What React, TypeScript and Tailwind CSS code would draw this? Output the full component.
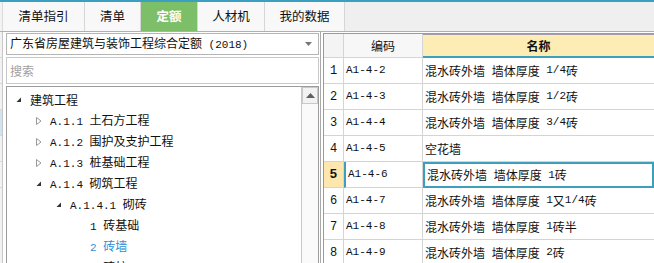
const tabs = ["清单指引", "清单", "定额", "人材机", "我的数据"];
const tabWidths = ["w-[82px]", "w-[56px]", "w-[57px]", "w-[67px]", "w-[80px]"];

const tree = [
  { level: 0, icon: "open", text: "建筑工程" },
  { level: 1, icon: "closed", text: "A.1.1 土石方工程" },
  { level: 1, icon: "closed", text: "A.1.2 围护及支护工程" },
  { level: 1, icon: "closed", text: "A.1.3 桩基础工程" },
  { level: 1, icon: "open", text: "A.1.4 砌筑工程" },
  { level: 2, icon: "open", text: "A.1.4.1 砌砖" },
  { level: 3, icon: "none", text: "1 砖基础" },
  { level: 3, icon: "none", text: "2 砖墙", active: true },
  { level: 3, icon: "none", text: "3 砖柱" },
];

const rows = [
  ["A1-4-2", "混水砖外墙 墙体厚度 1/4砖"],
  ["A1-4-3", "混水砖外墙 墙体厚度 1/2砖"],
  ["A1-4-4", "混水砖外墙 墙体厚度 3/4砖"],
  ["A1-4-5", "空花墙"],
  ["A1-4-6", "混水砖外墙 墙体厚度 1砖"],
  ["A1-4-7", "混水砖外墙 墙体厚度 1又1/4砖"],
  ["A1-4-8", "混水砖外墙 墙体厚度 1砖半"],
  ["A1-4-9", "混水砖外墙 墙体厚度 2砖"],
];

const indent = ["pl-[7px]", "pl-[27px]", "pl-[47px]", "pl-[67px]"];

// ascii runs look like SimSun half-width glyphs, so give them a mono face
function Mixed({ s }: { s: string }) {
  const parts = s.split(/([\x20-\x7e]+)/).filter(Boolean);
  return (
    <>
      {parts.map((p, i) =>
        /^[\x20-\x7e]+$/.test(p) ? (
          <span key={i} className="font-['Liberation_Mono',monospace] text-[11px] whitespace-pre">
            {p}
          </span>
        ) : (
          <span key={i}>{p}</span>
        )
      )}
    </>
  );
}

function TreeIcon({ kind }: { kind: string }) {
  if (kind === "open")
    return (
      <svg width="10" height="10" viewBox="0 0 10 10" className="shrink-0">
        <path d="M7 2.5 L7 7 L2.5 7 Z" fill="#333" />
      </svg>
    );
  if (kind === "closed")
    return (
      <svg width="10" height="10" viewBox="0 0 10 10" className="shrink-0">
        <path d="M2.5 1.5 L7 5 L2.5 8.5 Z" fill="#fff" stroke="#999" strokeWidth="1" />
      </svg>
    );
  return <span className="w-[10px] shrink-0" />;
}

export default function App() {
  return (
    <div className="w-[654px] h-[263px] overflow-hidden bg-white text-[12px] text-[#111] font-['Noto_Sans_CJK_SC',sans-serif] leading-none">
      <div className="h-[2px] bg-[#3b9fbf]" />

      {/* tab bar */}
      <div className="flex h-[30px] bg-[#efefef] border-b border-[#8fca7d]">
        <div className="w-[3px] border-r border-[#dcdcdc] bg-[#f3f3f3]" />
        {tabs.map((t, i) => (
          <div
            key={t}
            className={
              "flex items-center justify-center border-r border-[#d6d6d6] text-[12.5px] " +
              tabWidths[i] +
              (t === "定额" ? " bg-[#7dbf69] text-white font-bold" : " bg-[#f8f8f8]")
            }
          >
            {t}
          </div>
        ))}
      </div>

      <div className="flex h-[231px]">
        {/* left strip */}
        <div className="w-[3px] flex flex-col border-r border-[#c8c8c8] bg-[#f2f2f2]">
          <div className="h-[26px] border-b border-[#d8d8d8]" />
          <div className="h-[26px] border-b border-[#d8d8d8]" />
          <div className="h-[26px] border-b border-[#d8d8d8]" />
          <div className="h-[26px] border-b border-[#d8d8d8] bg-[#cfe4f2]" />
          <div className="h-[26px] border-b border-[#d8d8d8]" />
          <div className="h-[26px] border-b border-[#d8d8d8]" />
        </div>

        {/* left panel */}
        <div className="w-[318px] flex flex-col pl-[3px] pr-[1px] pt-[1px] border-r border-[#a9a9a9] overflow-hidden">
          <div className="h-[22px] shrink-0 flex items-center border border-[#b5b5b5] bg-white pl-[3px] pr-[6px]">
            <span className="flex-1">
              <Mixed s="广东省房屋建筑与装饰工程综合定额 (2018)" />
            </span>
            <svg width="7" height="4" viewBox="0 0 7 4">
              <path d="M0 0 L7 0 L3.5 4 Z" fill="#777" />
            </svg>
          </div>
          <div className="mt-[2px] h-[27px] shrink-0 flex items-center border border-[#c9c9c9] bg-white pl-[3px] text-[#a0a0a0]">
            搜索
          </div>
          <div className="mt-[2px] flex-1 min-h-0 flex border border-[#9c9c9c] border-b-0 bg-white overflow-hidden">
            <div className="flex-1 flex flex-col pt-[2px]">
              {tree.map((n) => (
                <div key={n.text} className={"h-[21px] flex items-center gap-[6px] shrink-0 " + indent[n.level]}>
                  <TreeIcon kind={n.icon} />
                  <span className={n.active ? "text-[#2f8fd8]" : ""}>
                    <Mixed s={n.text} />
                  </span>
                </div>
              ))}
            </div>
            <div className="w-[17px] border-l border-[#c8c8c8] bg-[#fafafa] flex flex-col">
              <div className="h-[17px] flex items-center justify-center border border-[#c9c9c9] bg-[#f2f2f2]">
                <svg width="9" height="5" viewBox="0 0 9 5">
                  <path d="M0 5 L4.5 0 L9 5 Z" fill="#606060" />
                </svg>
              </div>
            </div>
          </div>
        </div>

        {/* grid */}
        <div className="flex-1 ml-[2px] mt-[1px] border-l border-t border-[#9a9a9a] flex flex-col">
          <div className="flex h-[24px] shrink-0">
            <div className="w-[20px] bg-[#f4f4f4] border-r border-b border-[#d4d4d4]" />
            <div className="w-[79px] bg-[#f7f7f7] border-r border-b border-[#d4d4d4] flex items-center justify-center">
              编码
            </div>
            <div className="flex-1 bg-[#fdedb5] border-t border-[#a79dac] border-b-2 border-b-[#3d9fbc] flex items-center justify-center font-bold">
              名称
            </div>
          </div>
          {rows.map(([code, name], i) => {
            const sel = i === 4;
            return (
              <div key={code} className="flex h-[26px] shrink-0">
                <div
                  className={
                    "w-[20px] border-r border-b border-[#d4d4d4] flex items-center justify-center font-['Liberation_Mono',monospace] " +
                    (sel ? "bg-[#fde7ae] font-bold text-[13px]" : "bg-white text-[12px]")
                  }
                >
                  {i + 1}
                </div>
                <div
                  className={
                    "w-[79px] border-r border-b border-[#d4d4d4] flex items-center pl-[2px] " +
                    (sel ? "border-l-2 border-l-[#3d9fbc] pl-[0px]" : "")
                  }
                >
                  <Mixed s={code} />
                </div>
                <div
                  className={
                    "flex-1 flex items-center pl-[2px] " +
                    (sel ? "border-2 border-[#3d9fbc] pl-[0px]" : "border-b border-[#d4d4d4]")
                  }
                >
                  <Mixed s={name} />
                </div>
              </div>
            );
          })}
        </div>
      </div>
    </div>
  );
}
